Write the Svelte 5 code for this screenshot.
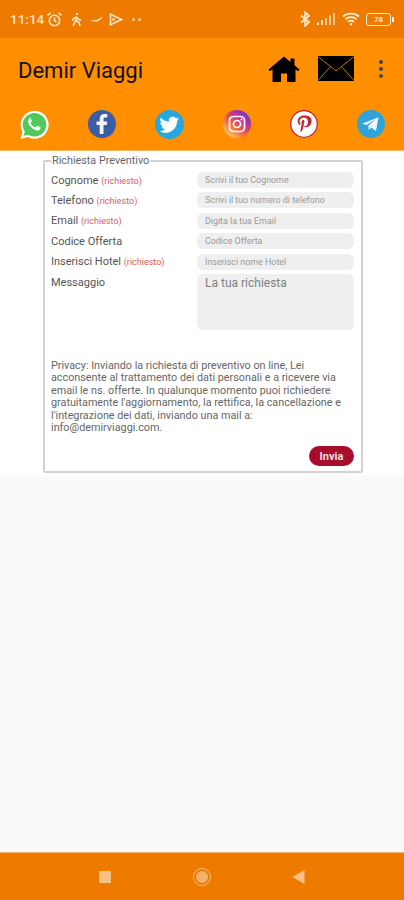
<script>
  const fields = [
    { label: "Cognome", required: true, hint: "Scrivi il tuo Cognome" },
    { label: "Telefono", required: true, hint: "Scrivi il tuo numero di telefono" },
    { label: "Email", required: true, hint: "Digita la tua Email" },
    { label: "Codice Offerta", required: false, hint: "Codice Offerta" },
    { label: "Inserisci Hotel", required: true, hint: "Inserisci nome Hotel" },
  ];
</script>

<div class="screen">
  <div class="status">
    <div class="status-left">
      <span class="time">11:14</span>
      <svg width="17" height="17" viewBox="0 0 17 17" fill="none" stroke="#fbe3c4" stroke-width="1.6">
        <circle cx="8.5" cy="9.5" r="5.2" />
        <path d="M8.5 6.5v3.2l2 1.2M1.6 4.4l3-2.6M15.4 4.4l-3-2.6" />
      </svg>
      <svg class="walk" width="11" height="15" viewBox="0 0 11 15" fill="none" stroke="#fbe3c4" stroke-width="1.6">
        <circle cx="6" cy="2" r="1.2" fill="#fbe3c4" stroke="none" />
        <path d="M5.5 4.5 4.5 9 2 14M5 8.5l3 2 1 3.5M5.5 5 2 7v2M6 5.5l1.5 2 2.5.8" />
      </svg>
      <svg class="tilde" width="11" height="5" viewBox="0 0 11 5" fill="none" stroke="#fbe3c4" stroke-width="1.2">
        <path d="M.5 3.5c4 1 7 .5 10-3" />
      </svg>
      <svg class="play" width="14" height="13" viewBox="0 0 14 13" fill="none" stroke="#fbe3c4" stroke-width="1.6">
        <path d="M1.5 1.2v10.6L12.5 6.5z" />
        <circle cx="4.5" cy="6.5" r="1.4" fill="#fbe3c4" stroke="none" />
      </svg>
      <span class="dots"><i></i><i></i></span>
    </div>
    <div class="status-right">
      <svg width="11" height="16" viewBox="0 0 11 16" fill="none" stroke="#fbe3c4" stroke-width="2">
        <path d="M1 4.5 9 11l-3.8 3.6V1.4L9 5 1 11.500" />
      </svg>
      <svg class="signal" width="20" height="12" viewBox="0 0 20 12" fill="#f8c98c">
        <rect x="0" y="9.500" width="2" height="2.500" fill="#fff2e0" />
        <rect x="4" y="7" width="2" height="5" fill="#fde2bd" />
        <rect x="8" y="5" width="2" height="7" />
        <rect x="12" y="2.500" width="2" height="9.500" />
        <rect x="16" y="0" width="2" height="12" />
      </svg>
      <svg class="wifi" width="18" height="14" viewBox="0 0 18 14" fill="none" stroke="#fff2e0" stroke-width="1.7">
        <path d="M1 4.500c4.600-4 11.400-4 16 0M3.500 7.200c3.200-2.700 7.800-2.700 11 0M6 9.800c1.800-1.400 4.200-1.400 6 0" />
        <circle cx="9" cy="12.300" r="1.200" fill="#fff2e0" stroke="none" />
      </svg>
      <div class="battery"><span class="level">78</span></div>
    </div>
  </div>

  <header class="toolbar">
    <h1>Demir Viaggi</h1>
    <div class="actions">
      <svg class="home" width="32" height="28" viewBox="0 0 32 28">
        <path d="M16 1.500 0.500 14.500l1.500 1.800 2.500-2V27h8.500v-8.500h6V27h8.500V14.300l2.500 2 1.500-1.800-5-4.200V3.500h-4v3.400z" fill="#000" />
      </svg>
      <svg class="mail" width="36" height="25" viewBox="0 0 36 26" preserveAspectRatio="none">
        <rect width="36" height="26" fill="#000" />
        <path d="M0.500 1 18 15.500 35.500 1M0.500 25 12.500 11M35.500 25 23.500 11" fill="none" stroke="#c07a10" stroke-width="1" />
      </svg>
      <div class="more"><i></i><i></i><i></i></div>
    </div>
  </header>

  <nav class="social">
    <svg width="30" height="30" viewBox="0 0 30 30">
      <path d="M1.500 29l2-7.200A14 14 0 1 1 8.800 27z" fill="#fff" />
      <path d="M4.500 25.800l1.300-4.400A11.800 11.800 0 1 1 9.200 24.700z" fill="#4ec95c" />
      <path d="M10.500 8.500c-1.500 1-1.800 3-.8 5.200 1.300 2.800 3.800 5.200 6.600 6.300 2.200.9 4.200.4 5-1.100.4-.7.400-1.400.2-1.700l-3-1.500c-.4-.1-.6 0-.8.300l-1 1.200c-.2.200-.5.300-.8.100-2-.9-3.400-2.300-4.300-4.200-.1-.3 0-.5.200-.7l.8-1c.2-.3.2-.5.100-.8l-1.200-2.700c-.2-.4-.6-.4-1-.4z" fill="#fff" />
    </svg>
    <svg width="28" height="28" viewBox="0 0 28 28">
      <circle cx="14" cy="14" r="14" fill="#3b5da8" />
      <path d="M15.500 24v-9h3.200l.5-3.600h-3.700V9.200c0-1 .3-1.700 1.800-1.700h2V4.300c-.4 0-1.500-.2-2.900-.2-2.800 0-4.700 1.700-4.700 4.800v2.500H8.500V15h3.200v9z" fill="#f4f6fb" />
    </svg>
    <svg width="29" height="29" viewBox="0 0 29 29">
      <circle cx="14.500" cy="14.500" r="14.500" fill="#27a6e0" />
      <path d="M24 8.800c-.7.300-1.500.5-2.300.6.800-.5 1.500-1.300 1.800-2.200-.8.500-1.600.8-2.500 1A4 4 0 0 0 14 11.800C10.700 11.600 7.800 10 5.800 7.600c-1 1.800-.5 4.100 1.200 5.300-.6 0-1.200-.2-1.800-.5 0 1.900 1.300 3.600 3.200 4-.6.200-1.200.2-1.800.1.500 1.600 2 2.700 3.700 2.800A8 8 0 0 1 4.500 21a11.400 11.400 0 0 0 17.500-10c.8-.6 1.500-1.300 2-2.200z" fill="#fff" />
    </svg>
    <svg width="28" height="28" viewBox="0 0 28 28">
      <defs>
        <linearGradient id="ig" x1="0.150" y1="0.950" x2="0.850" y2="0.100">
          <stop offset="0" stop-color="#fdd56e" />
          <stop offset="0.400" stop-color="#f0663f" />
          <stop offset="0.700" stop-color="#c92f95" />
          <stop offset="1" stop-color="#6a3cc4" />
        </linearGradient>
      </defs>
      <circle cx="14" cy="14" r="14" fill="url(#ig)" />
      <rect x="6.500" y="6.500" width="15" height="15" rx="4" fill="none" stroke="#fff" stroke-width="1.700" />
      <circle cx="14" cy="14" r="3.500" fill="none" stroke="#fff" stroke-width="1.700" />
      <circle cx="18.500" cy="9.500" r="1.100" fill="#fff" />
    </svg>
    <svg width="28" height="28" viewBox="0 0 28 28">
      <circle cx="14" cy="14" r="13.300" fill="#fff" stroke="#c8232c" stroke-width="1.300" />
      <path d="M14.300 5.500c-4.300 0-6.600 2.700-6.600 5.700 0 1.500.8 3.300 2.100 3.900.4.200.4 0 .7-1.200 0-.2 0-.3-.2-.5-1.700-2.300-.2-6 3.800-6 5.600 0 4.500 8.800.9 8.800-.9 0-1.600-.8-1.400-1.700.3-1.100.8-2.300.8-3.100 0-2-2.900-1.700-2.900 1 0 .8.300 1.400.3 1.400L10.700 19c-.3 1.200 0 3.100 0 3.300 0 .1.200.1.200.1.100-.2 1.500-2.100 1.900-3.600l.7-2.700c.4.700 1.400 1.200 2.500 1.200 3.300 0 5.600-3 5.600-6.700 0-2.800-2.500-5.100-7.300-5.100z" fill="#c8232c" />
    </svg>
    <svg width="28" height="28" viewBox="0 0 28 28">
      <circle cx="14" cy="14" r="14" fill="#2fa3da" />
      <path d="M5 13.800 21.500 7.300 19 21l-4.800-3.500-2.400 2.400-.5-4.100 7.300-6.600-9 5.700z" fill="#eef7fc" />
    </svg>
  </nav>

  <main class="content">
    <fieldset>
      <legend>Richiesta Preventivo</legend>
      <div class="fields">
        {#each fields as field}
          <div class="row">
            <label for={field.label}>
              {field.label}
              {#if field.required}<span class="req">(richiesto)</span>{/if}
            </label>
            <input id={field.label} placeholder={field.hint} />
          </div>
        {/each}
        <div class="row message">
          <label for="msg">Messaggio</label>
          <textarea id="msg" placeholder="La tua richiesta"></textarea>
        </div>
      </div>
      <p class="privacy">
        Privacy: Inviando la richiesta di preventivo on line, Lei acconsente al trattamento dei dati personali e a ricevere via email le ns. offerte. In qualunque momento puoi richiedere gratuitamente l'aggiornamento, la rettifica, la cancellazione e l'integrazione dei dati, inviando una mail a: info@demirviaggi.com.
      </p>
      <div class="send"><button>Invia</button></div>
    </fieldset>
  </main>

  <footer class="navbar">
    <span class="square"></span>
    <span class="circle"></span>
    <svg width="13" height="14" viewBox="0 0 13 14"><path d="M12.500 0v14L0.500 7z" fill="#f8c184" /></svg>
  </footer>
</div>

<style>
  :global(body) {
    margin: 0;
    background: #fafafa;
  }

  .screen {
    width: 404px;
    height: 900px;
    display: flex;
    flex-direction: column;
    font-family: Roboto, "Liberation Sans", sans-serif;
    overflow: hidden;
  }

  .status {
    height: 38px;
    background: #ee7a00;
    display: flex;
    justify-content: space-between;
    align-items: center;
    padding: 0 13px 0 10px;
    box-sizing: border-box;
    color: #fbe3c4;
  }

  .status-left,
  .status-right {
    display: flex;
    align-items: center;
  }

  .time {
    font-size: 13.5px;
    font-weight: 500;
    margin-right: 2px;
  }

  .walk {
    margin-left: 8px;
  }

  .tilde {
    margin-left: 9px;
  }

  .play {
    margin-left: 7px;
  }

  .dots {
    display: flex;
    gap: 3px;
    margin-left: 9px;
  }

  .dots i {
    width: 3px;
    height: 3px;
    border-radius: 50%;
    background: #f9cf9c;
  }

  .signal {
    margin-left: 6px;
  }

  .wifi {
    margin-left: 5px;
  }

  .battery {
    width: 23px;
    height: 11px;
    margin-left: 6px;
    border: 1.500px solid #fff0dc;
    border-radius: 3px;
    position: relative;
    display: flex;
    align-items: center;
    justify-content: center;
  }

  .battery::after {
    content: "";
    position: absolute;
    right: -4px;
    top: 3px;
    width: 2px;
    height: 5px;
    background: #fff0dc;
  }

  .level {
    font-size: 8px;
    font-weight: 700;
    color: #fff0dc;
  }

  .toolbar {
    height: 62px;
    background: #ff8f00;
    display: flex;
    justify-content: space-between;
    align-items: center;
    padding: 2px 18px 0;
    box-sizing: border-box;
  }

  h1 {
    margin: 0;
    font-size: 22px;
    font-weight: 400;
    color: #111;
  }

  .actions {
    display: flex;
    align-items: center;
    margin-top: -3px;
  }

  .home {
    margin-right: 18px;
  }

  .mail {
    margin-right: 25px;
  }

  .more {
    display: flex;
    flex-direction: column;
    gap: 3px;
    margin-right: 3px;
  }

  .more i {
    width: 4px;
    height: 4px;
    border-radius: 50%;
    background: #444;
  }

  .social {
    height: 51px;
    background: #ff8f00;
    display: flex;
    justify-content: space-between;
    align-items: flex-start;
    padding: 10px 19px 0 19px;
    box-sizing: border-box;
    border-bottom: 1px solid #ffb35c;
  }

  .content {
    background: #fff;
    padding: 5px 41px 2px 43px;
  }

  fieldset {
    margin: 0;
    padding: 6px 7px 5px 6px;
    border: 2px solid #d2d2d2;
    border-radius: 2px;
    min-width: 0;
    height: 317px;
    box-sizing: border-box;
    display: flex;
    flex-direction: column;
  }

  legend {
    padding: 0 1px;
    margin-left: 0;
    font-size: 10.800px;
    line-height: 10px;
    color: #666;
  }

  .fields {
    display: flex;
    flex-direction: column;
    gap: 4.400px;
  }

  .row {
    display: flex;
    justify-content: space-between;
    align-items: center;
  }

  .row.message {
    align-items: flex-start;
  }

  .row.message label {
    padding-top: 2px;
  }

  label {
    font-size: 11px;
    color: #555;
  }

  .req {
    font-size: 9px;
    color: #dc5a60;
  }

  input,
  textarea {
    width: 157px;
    border: 0;
    border-radius: 6px;
    background: #efefef;
    box-sizing: border-box;
    font-family: inherit;
    display: block;
    margin: 0;
  }

  input {
    height: 16px;
    padding: 0 8px;
    font-size: 8.900px;
  }

  input::placeholder {
    color: #999;
    opacity: 1;
  }

  textarea {
    height: 56px;
    padding: 2px 8px;
    font-size: 12px;
    resize: none;
  }

  textarea::placeholder {
    color: #808080;
    opacity: 1;
  }

  .privacy {
    margin: 30px 0 0 0;
    font-size: 10.800px;
    line-height: 12.400px;
    color: #666;
  }

  .send {
    margin-top: auto;
    display: flex;
    justify-content: flex-end;
  }

  button {
    width: 45px;
    height: 20px;
    border: 0;
    border-radius: 10px;
    background: #a80d2c;
    color: #f3dfe2;
    font-family: inherit;
    font-size: 11px;
    font-weight: 700;
    padding: 0;
  }

  .navbar {
    margin-top: auto;
    height: 48px;
    background: #ef7a00;
    border-top: 1px solid #f6b56d;
    display: flex;
    align-items: center;
    justify-content: space-between;
    padding: 0 99px 0 99px;
    box-sizing: border-box;
  }

  .square {
    width: 12px;
    height: 12px;
    background: #f8c184;
  }

  .circle {
    width: 12px;
    height: 12px;
    border-radius: 50%;
    background: #f5b06c;
    outline: 1px solid #f8c184;
    outline-offset: 2px;
  }
</style>
